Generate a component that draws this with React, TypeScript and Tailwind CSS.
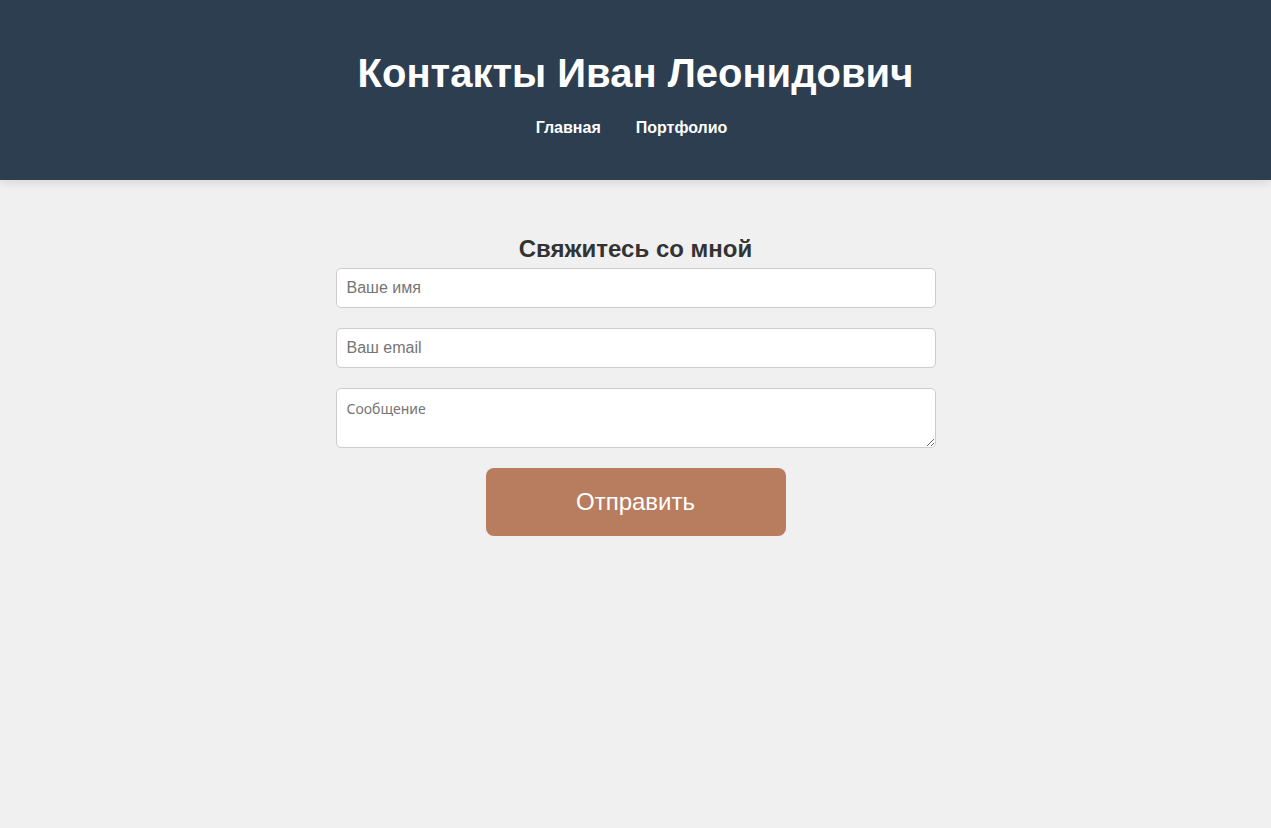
export default function App() {
  return (
    <div className="min-h-screen bg-[#f0f0f0] font-['Liberation_Sans',Arial,sans-serif] text-[#333]">
      <header className="bg-[#2c3e50] h-[180px] flex flex-col items-center pt-[50px] shadow-[0_2px_10px_rgba(0,0,0,0.12)]">
        <h1 className="text-[40px] leading-[46px] font-bold text-white">Контакты Иван Леонидович</h1>
        <nav className="mt-[23px] pr-[8px] flex gap-[35px] text-[16px] leading-[18px] font-bold text-white">
          <a href="#">Главная</a>
          <a href="#">Портфолио</a>
        </nav>
      </header>

      <main className="flex flex-col items-center pt-[55px]">
        <h2 className="text-[24px] leading-[28px] font-bold text-[#333]">Свяжитесь со мной</h2>
        <form className="w-[600px] mt-[5px] flex flex-col gap-[20px]" onSubmit={(e) => e.preventDefault()}>
          <input
            type="text"
            placeholder="Ваше имя"
            className="h-[40px] px-[10px] bg-white border border-[#ccc] rounded-[5px] text-[16px] placeholder:text-[#757575] outline-none"
          />
          <input
            type="email"
            placeholder="Ваш email"
            className="h-[40px] px-[10px] bg-white border border-[#ccc] rounded-[5px] text-[16px] placeholder:text-[#757575] outline-none"
          />
          <textarea
            placeholder="Сообщение"
            className="h-[60px] px-[10px] pt-[12px] pb-[8px] bg-white border border-[#ccc] rounded-[5px] text-[14px] leading-[16px] font-['Noto_Sans',sans-serif] placeholder:text-[#757575] outline-none"
          />
          <button
            type="submit"
            className="self-center w-[300px] h-[68px] bg-[#b87d5e] text-white text-[24px] rounded-[8px]"
          >
            Отправить
          </button>
        </form>
      </main>
    </div>
  );
}
